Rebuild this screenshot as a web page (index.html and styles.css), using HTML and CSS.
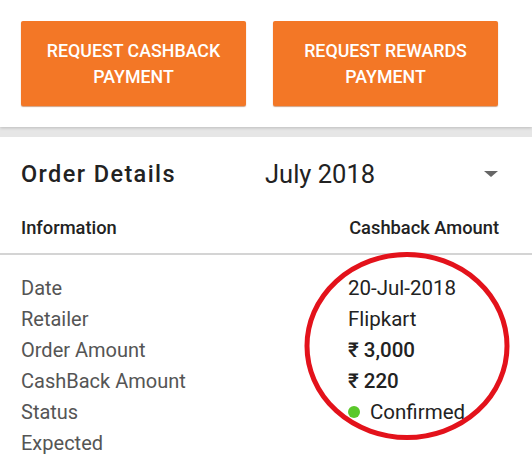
FILE: index.html
```html
<!DOCTYPE html>
<html lang="en">
<head>
  <meta charset="UTF-8">
  <meta name="viewport" content="width=device-width, initial-scale=1.0">
  <title>Order Details</title>
  <link rel="stylesheet" href="styles.css">
</head>
<body>
  <!-- Payment request buttons -->
  <div class="card actions">
    <button class="pay-btn">Request Cashback Payment</button>
    <button class="pay-btn">Request Rewards Payment</button>
  </div>

  <div class="card details">
    <div class="details-head">
      <h2 class="details-title">Order Details</h2>
      <div class="month-select">
        <span>July 2018</span>
        <span class="caret"></span>
      </div>
    </div>

    <div class="table-head">
      <span>Information</span>
      <span>Cashback Amount</span>
    </div>

    <div class="rows">
      <span class="label">Date</span><span class="value">20-Jul-2018</span>
      <span class="label">Retailer</span><span class="value">Flipkart</span>
      <span class="label">Order Amount</span><span class="value strong">₹ 3,000</span>
      <span class="label">CashBack Amount</span><span class="value strong">₹ 220</span>
      <span class="label">Status</span><span class="value"><i class="dot"></i>Confirmed</span>
      <span class="label">Expected</span><span class="value"></span>

      <!-- hand-drawn highlight -->
      <svg class="circle-mark" width="210" height="192" viewBox="0 0 210 192">
        <ellipse cx="105" cy="96" rx="100" ry="91.5" fill="none" stroke="#e3121b" stroke-width="5"/>
      </svg>
    </div>
  </div>
</body>
</html>
```

FILE: styles.css
```css
body {
  font-family: 'Roboto', 'Noto Sans', sans-serif;
  margin: 0;
  padding: 0;
  background-color: #e6e6e6;
  color: #222;
}
.card {
  background-color: #fff;
}
.actions {
  display: flex;
  gap: 27px;
  padding: 21px 34px 21px 21px;
  height: 85px;
  box-shadow: 0 1px 3px rgba(0, 0, 0, 0.18);
  margin-bottom: 10px;
}
.pay-btn {
  flex: 1;
  background-color: #f37726;
  color: #fff;
  border: none;
  border-radius: 2px;
  box-shadow: 0 1px 1px rgba(160, 70, 10, 0.5);
  font-family: inherit;
  font-size: 17.8px;
  font-weight: 500;
  line-height: 26px;
  text-transform: uppercase;
  padding: 0 16px;
  cursor: pointer;
}
.details {
  min-height: 325px;
}
.details-head {
  display: flex;
  align-items: center;
  height: 74px;
  padding: 0 33px 0 21px;
}
.details-title {
  margin: 0;
  width: 244px;
  font-size: 23.5px;
  font-weight: 500;
  letter-spacing: 1.4px;
  color: #222;
}
.month-select {
  flex: 1;
  display: flex;
  align-items: center;
  justify-content: space-between;
  font-size: 25.5px;
  color: #222;
}
.caret {
  width: 0;
  height: 0;
  border-left: 7px solid transparent;
  border-right: 7px solid transparent;
  border-top: 6px solid #666;
  margin-right: 1px;
}
.table-head {
  display: flex;
  justify-content: space-between;
  align-items: center;
  height: 32px;
  padding: 0 33px 10px 21px;
  border-bottom: 2px solid #d4d4d4;
  font-size: 18.3px;
  font-weight: 500;
  color: #222;
}
.rows {
  position: relative;
  display: grid;
  grid-template-columns: 327px 1fr;
  grid-auto-rows: 31px;
  align-items: center;
  padding: 17px 33px 0 21px;
  font-size: 20px;
}
.label {
  color: #555;
}
.value {
  color: #222;
  display: flex;
  align-items: center;
  font-size: 20.5px;
}
.strong {
  font-weight: 500;
}
.dot {
  width: 12px;
  height: 12px;
  border-radius: 50%;
  background-color: #5ac82a;
  margin-right: 10px;
}
.circle-mark {
  position: absolute;
  left: 302px;
  top: -5px;
}
```
